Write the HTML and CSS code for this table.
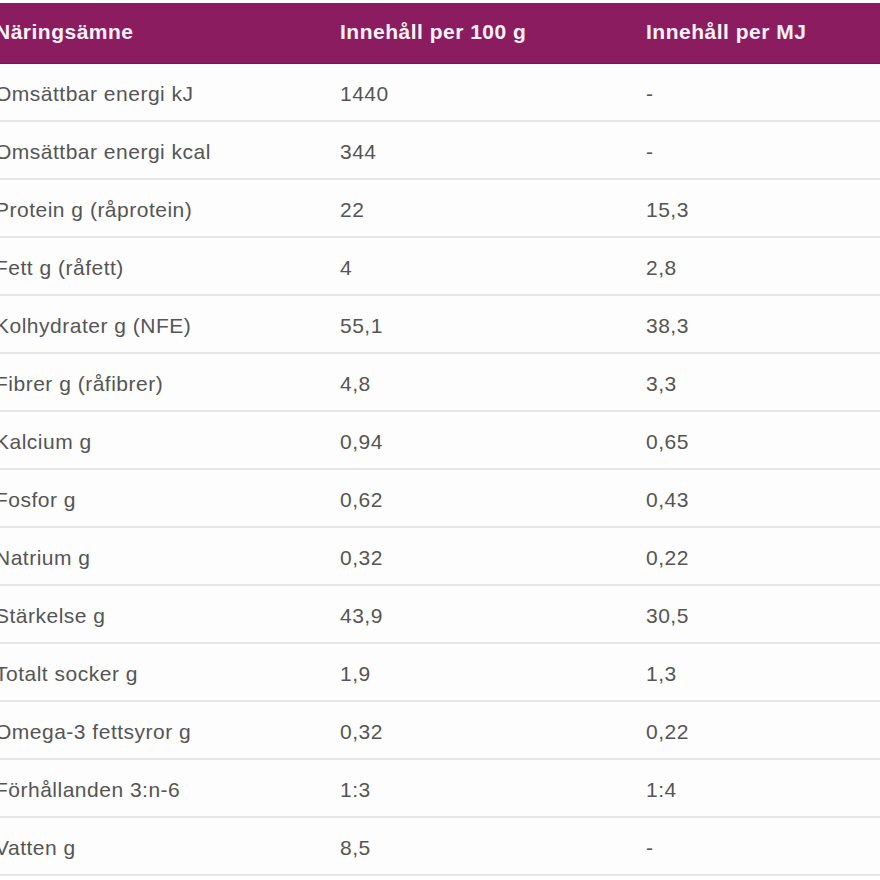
FILE: index.html
```html
<!DOCTYPE html>
<html lang="sv">
<head>
<meta charset="utf-8">
<title>Näringsinnehåll</title>
<link rel="stylesheet" href="styles.css">
</head>
<body>
<table class="nutrition">
  <thead>
    <tr><th>Näringsämne</th><th>Innehåll per 100 g</th><th>Innehåll per MJ</th></tr>
  </thead>
  <tbody>
    <tr><td>Omsättbar energi kJ</td><td>1440</td><td>-</td></tr>
    <tr><td>Omsättbar energi kcal</td><td>344</td><td>-</td></tr>
    <tr><td>Protein g (råprotein)</td><td>22</td><td>15,3</td></tr>
    <tr><td>Fett g (råfett)</td><td>4</td><td>2,8</td></tr>
    <tr><td>Kolhydrater g (NFE)</td><td>55,1</td><td>38,3</td></tr>
    <tr><td>Fibrer g (råfibrer)</td><td>4,8</td><td>3,3</td></tr>
    <tr><td>Kalcium g</td><td>0,94</td><td>0,65</td></tr>
    <tr><td>Fosfor g</td><td>0,62</td><td>0,43</td></tr>
    <tr><td>Natrium g</td><td>0,32</td><td>0,22</td></tr>
    <tr><td>Stärkelse g</td><td>43,9</td><td>30,5</td></tr>
    <tr><td>Totalt socker g</td><td>1,9</td><td>1,3</td></tr>
    <tr><td>Omega-3 fettsyror g</td><td>0,32</td><td>0,22</td></tr>
    <tr><td>Förhållanden 3:n-6</td><td>1:3</td><td>1:4</td></tr>
    <tr><td>Vatten g</td><td>8,5</td><td>-</td></tr>
  </tbody>
</table>
</body>
</html>
```
FILE: styles.css
```css
html, body {
  margin: 0;
  padding: 0;
  background: #ffffff;
}
body {
  padding-top: 3px;
  overflow: hidden;
}
.nutrition {
  border-collapse: collapse;
  width: 890px;
  margin-left: -5px;
  table-layout: fixed;
  font-family: "Liberation Sans", Arial, Helvetica, sans-serif;
  font-size: 21px;
  letter-spacing: 0.5px;
}
.nutrition th:nth-child(1), .nutrition td:nth-child(1) { width: 345px; }
.nutrition th:nth-child(2), .nutrition td:nth-child(2) { width: 306px; }
.nutrition th {
  background: #8b1c5f;
  color: #fbf3f8;
  font-weight: bold;
  text-align: left;
  height: 60px;
  padding: 0 0 2px 0;
  box-sizing: border-box;
  border-bottom: 1px solid #7a1652;
  vertical-align: middle;
}
.nutrition td {
  color: #555555;
  height: 58px;
  padding: 4px 0 0 0;
  box-sizing: border-box;
  border-bottom: 2px solid #e6e6e6;
  background: #fdfdfd;
  vertical-align: middle;
}
```
